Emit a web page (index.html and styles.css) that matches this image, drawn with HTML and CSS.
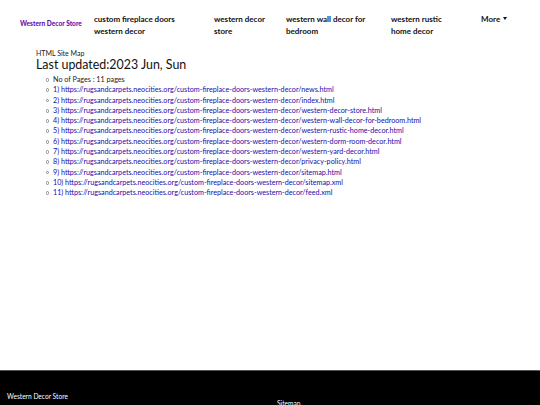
FILE: index.html
```html
<!DOCTYPE html>
<html>
<head>
<meta charset="utf-8">
<link rel="stylesheet" href="styles.css">
</head>
<body>
<nav class="navbar">
  <a class="brand" href="#">Western Decor Store</a>
  <ul class="menu">
    <li class="w1">custom fireplace doors western decor</li>
    <li class="w2">western decor store</li>
    <li class="w3">western wall decor for bedroom</li>
    <li class="w4">western rustic home decor</li>
    <li class="more">More <span class="caret"></span></li>
  </ul>
</nav>
<main class="content">
  <div class="small-title">HTML Site Map</div>
  <h1 class="updated">Last updated:2023 Jun, Sun</h1>
  <ul class="pages">
    <li>No of Pages : 11 pages</li>
    <li><a href="#">1) https://rugsandcarpets.neocities.org/custom-fireplace-doors-western-decor/news.html</a></li>
    <li><a href="#">2) https://rugsandcarpets.neocities.org/custom-fireplace-doors-western-decor/index.html</a></li>
    <li><a href="#">3) https://rugsandcarpets.neocities.org/custom-fireplace-doors-western-decor/western-decor-store.html</a></li>
    <li><a href="#">4) https://rugsandcarpets.neocities.org/custom-fireplace-doors-western-decor/western-wall-decor-for-bedroom.html</a></li>
    <li><a href="#">5) https://rugsandcarpets.neocities.org/custom-fireplace-doors-western-decor/western-rustic-home-decor.html</a></li>
    <li><a href="#">6) https://rugsandcarpets.neocities.org/custom-fireplace-doors-western-decor/western-dorm-room-decor.html</a></li>
    <li><a href="#">7) https://rugsandcarpets.neocities.org/custom-fireplace-doors-western-decor/western-yard-decor.html</a></li>
    <li><a href="#">8) https://rugsandcarpets.neocities.org/custom-fireplace-doors-western-decor/privacy-policy.html</a></li>
    <li><a href="#">9) https://rugsandcarpets.neocities.org/custom-fireplace-doors-western-decor/sitemap.html</a></li>
    <li><a href="#">10) https://rugsandcarpets.neocities.org/custom-fireplace-doors-western-decor/sitemap.xml</a></li>
    <li><a href="#">11) https://rugsandcarpets.neocities.org/custom-fireplace-doors-western-decor/feed.xml</a></li>
  </ul>
</main>
<footer class="footer">
  <div class="foot-brand">Western Decor Store</div>
  <div class="foot-link">Sitemap</div>
</footer>
</body>
</html>
```

FILE: styles.css
```css
html, body {
  margin: 0;
  padding: 0;
}
body {
  width: 540px;
  height: 405px;
  overflow: hidden;
  font-family: "Lato", "Open Sans", sans-serif;
  color: #111;
  background: #fff;
  display: flex;
  flex-direction: column;
}
.navbar {
  display: flex;
  align-items: flex-start;
  padding: 13px 0 0 20px;
  height: 27px;
}
.brand {
  color: #6a0dad;
  font-weight: 900;
  font-size: 6.6px;
  text-decoration: none;
  margin-top: 6px;
  width: 74px;
  white-space: nowrap;
}
.menu {
  list-style: none;
  margin: 0;
  padding: 0;
  display: grid;
  grid-template-columns: 120px 72px 105px 90px auto;
}
.menu li {
  font-weight: 700;
  font-size: 8px;
  line-height: 12px;
  color: #111;
}
.w1 { width: 86px; }
.w2 { width: 58px; }
.w3 { width: 88px; }
.w4 { width: 62px; }
.caret {
  display: inline-block;
  width: 0;
  height: 0;
  border-left: 2.5px solid transparent;
  border-right: 2.5px solid transparent;
  border-top: 3px solid #111;
  vertical-align: 2px;
  margin-left: 1px;
}
.content {
  flex: 1;
  padding: 9px 0 0 36px;
}
.small-title {
  font-size: 7px;
  line-height: 8px;
  color: #222;
}
.updated {
  margin: 1px 0 0 0;
  font-weight: 400;
  font-size: 12.4px;
  line-height: 14px;
  color: #111;
}
.pages {
  margin: 3px 0 0 0;
  padding-left: 17px;
  list-style: none;
  font-size: 7.2px;
  line-height: 10.3px;
  color: #222;
}
.pages li {
  position: relative;
}
.pages li::before {
  content: "";
  position: absolute;
  left: -7.5px;
  top: 3px;
  width: 1.8px;
  height: 1.8px;
  border: 0.7px solid #888;
  border-radius: 50%;
}
.pages a {
  color: #1a0dab;
  text-decoration: none;
}
.footer {
  height: 34px;
  background: #000;
  border-top: 1px solid #555;
  color: #fff;
  font-size: 6.6px;
  display: flex;
}
.foot-brand {
  padding: 21px 0 0 7px;
  width: 270px;
}
.foot-link {
  padding: 28px 0 0 0;
}
```
